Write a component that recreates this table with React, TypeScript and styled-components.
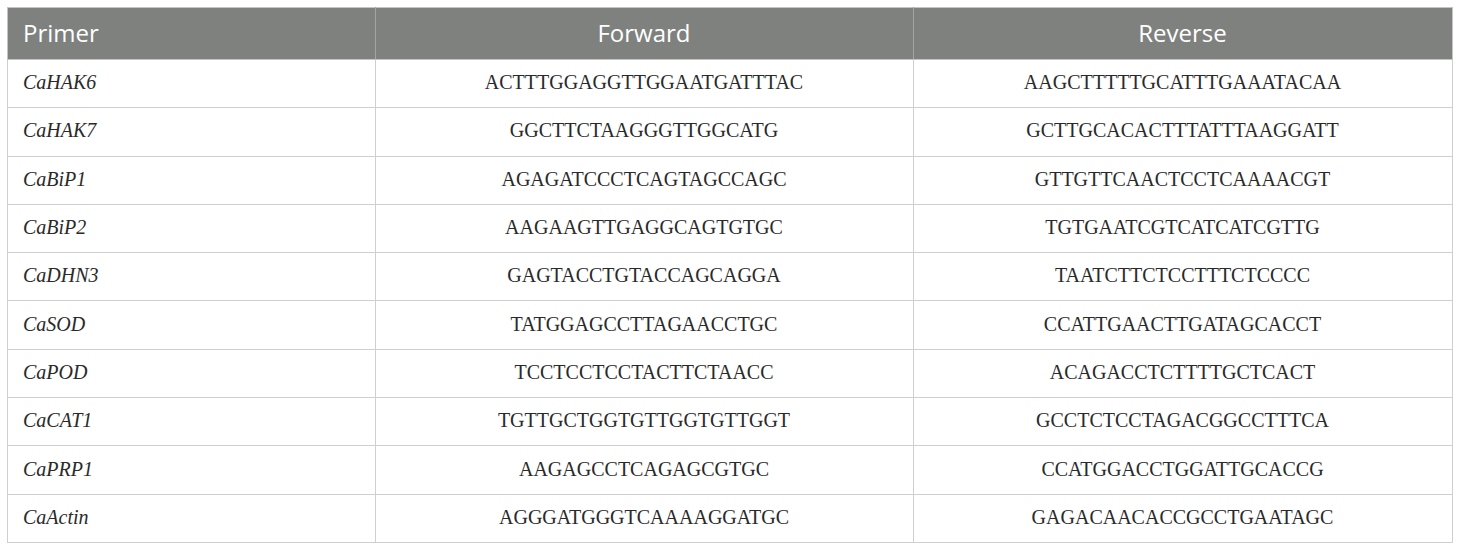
import React from "react";
import styled, { createGlobalStyle } from "styled-components";

const Global = createGlobalStyle`
  html, body { margin: 0; padding: 0; background: #ffffff; }
  body { width: 1460px; height: 550px; overflow: hidden; }
`;

const Page = styled.div`
  padding: 7px 8px 0 7px;
`;

const Table = styled.table`
  width: 1445px;
  border-collapse: collapse;
  table-layout: fixed;
  border: 1px solid #c4c4c4;
`;

const HeadCell = styled.th<{ $align?: "left" | "center" }>`
  background: #7f817f;
  color: #ffffff;
  font-family: "Open Sans", "Liberation Sans", sans-serif;
  font-weight: 400;
  font-size: 24px;
  height: 52px;
  padding: 0 16px 3px 15px;
  box-sizing: border-box;
  text-align: ${(p) => p.$align ?? "center"};
  border-left: 1px solid #a3a5a3;
  border-bottom: 1px solid #c4c4c4;
  &:first-child { border-left: none; }
`;

const Row = styled.tr`
  height: 48.3px;
`;

const Cell = styled.td<{ $italic?: boolean; $align?: "left" | "center" }>`
  font-family: "Liberation Serif", "Times New Roman", serif;
  font-size: 20px;
  color: #2a2a2a;
  font-style: ${(p) => (p.$italic ? "italic" : "normal")};
  text-align: ${(p) => p.$align ?? "center"};
  padding: 0 16px 2px 15px;
  border: 1px solid #cfcfcf;
  vertical-align: middle;
`;

const data: [string, string, string][] = [
  ["CaHAK6", "ACTTTGGAGGTTGGAATGATTTAC", "AAGCTTTTTGCATTTGAAATACAA"],
  ["CaHAK7", "GGCTTCTAAGGGTTGGCATG", "GCTTGCACACTTTATTTAAGGATT"],
  ["CaBiP1", "AGAGATCCCTCAGTAGCCAGC", "GTTGTTCAACTCCTCAAAACGT"],
  ["CaBiP2", "AAGAAGTTGAGGCAGTGTGC", "TGTGAATCGTCATCATCGTTG"],
  ["CaDHN3", "GAGTACCTGTACCAGCAGGA", "TAATCTTCTCCTTTCTCCCC"],
  ["CaSOD", "TATGGAGCCTTAGAACCTGC", "CCATTGAACTTGATAGCACCT"],
  ["CaPOD", "TCCTCCTCCTACTTCTAACC", "ACAGACCTCTTTTGCTCACT"],
  ["CaCAT1", "TGTTGCTGGTGTTGGTGTTGGT", "GCCTCTCCTAGACGGCCTTTCA"],
  ["CaPRP1", "AAGAGCCTCAGAGCGTGC", "CCATGGACCTGGATTGCACCG"],
  ["CaActin", "AGGGATGGGTCAAAAGGATGC", "GAGACAACACCGCCTGAATAGC"],
];

export default function App() {
  return (
    <>
      <Global />
      <Page>
        <Table>
          <colgroup>
            <col style={{ width: 368 }} />
            <col style={{ width: 538 }} />
            <col style={{ width: 539 }} />
          </colgroup>
          <thead>
            <tr>
              <HeadCell $align="left">Primer</HeadCell>
              <HeadCell>Forward</HeadCell>
              <HeadCell>Reverse</HeadCell>
            </tr>
          </thead>
          <tbody>
            {data.map(([name, fwd, rev]) => (
              <Row key={name}>
                <Cell $italic $align="left">{name}</Cell>
                <Cell>{fwd}</Cell>
                <Cell>{rev}</Cell>
              </Row>
            ))}
          </tbody>
        </Table>
      </Page>
    </>
  );
}
